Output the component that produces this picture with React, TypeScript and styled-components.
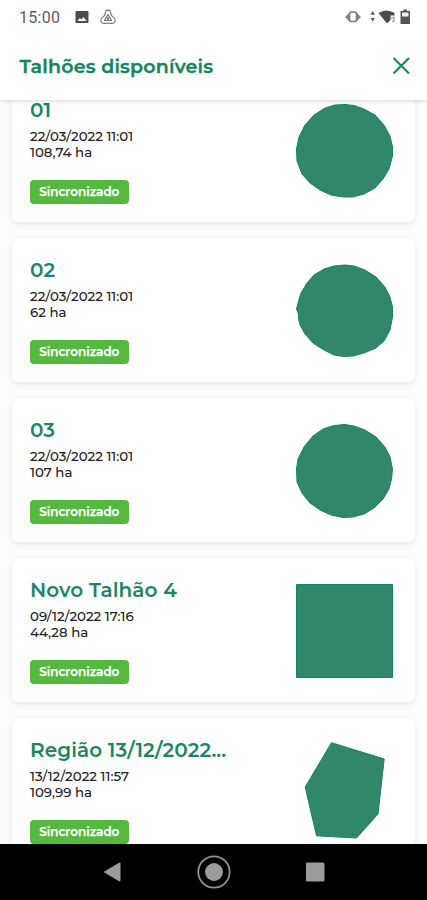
import React from "react";
import styled, { createGlobalStyle } from "styled-components";

const GlobalStyle = createGlobalStyle`
  * { box-sizing: border-box; }
  body { margin: 0; background: #fff; font-family: Montserrat, Inter, "Liberation Sans", sans-serif; }
`;

const Screen = styled.div`
  width: 427px;
  height: 900px;
  display: flex;
  flex-direction: column;
  overflow: hidden;
  background: #fff;
`;

const Top = styled.div`
  flex: 0 0 100px;
  position: relative;
  z-index: 1;
  background: #fff;
  box-shadow: 0 1px 5px rgba(0, 0, 0, 0.17);
`;

const StatusBar = styled.div`
  height: 36px;
  padding: 0 16px 0 19px;
  display: flex;
  align-items: center;
  color: #5c5c5c;
`;

const Clock = styled.span`
  font: 400 16px/20px Roboto, sans-serif;
  letter-spacing: 0.3px;
  width: 56px;
`;

const StatusIcons = styled.svg<{ $end?: boolean }>`
  display: block;
  margin-left: ${(p) => (p.$end ? "auto" : "0")};
`;

const Header = styled.header`
  height: 60px;
  padding: 0 16px 0 19.5px;
  display: flex;
  align-items: center;
  justify-content: space-between;
`;

const Heading = styled.h1`
  margin: 2px 0 0;
  font-size: 19px;
  line-height: 24px;
  font-weight: 600;
  letter-spacing: 0.2px;
  color: #158560;
  -webkit-text-stroke: 0.35px #158560;
  white-space: nowrap;
`;

const CloseButton = styled.button`
  border: 0;
  padding: 0;
  background: none;
  width: 19px;
  height: 20px;
`;

const List = styled.main`
  flex: 1;
  min-height: 0;
  overflow: hidden;
  padding: 0 12px;
  background: #fdfdfd;
`;

const Stack = styled.div`
  display: flex;
  flex-direction: column;
  gap: 17px;
  margin-top: -21px;
`;

const Card = styled.article`
  flex: none;
  height: 143px;
  padding: 20px 18px 18px;
  display: flex;
  justify-content: space-between;
  border-radius: 7px;
  background: #fff;
  box-shadow: 0 2px 7px rgba(0, 0, 0, 0.09);
`;

const Info = styled.div`
  display: flex;
  flex-direction: column;
  align-items: flex-start;
`;

const Title = styled.h2`
  margin: 0 0 6.5px;
  font-size: 20px;
  line-height: 22px;
  font-weight: 600;
  letter-spacing: 0.08px;
  color: #1c8564;
  white-space: nowrap;
`;

const Detail = styled.span`
  font-size: 13.35px;
  line-height: 16px;
  font-weight: 500;
  color: #222;
  white-space: nowrap;
`;

const Badge = styled.span`
  width: 98.5px;
  height: 24px;
  margin-top: auto;
  border-radius: 4px;
  background: #54b93d;
  color: #fff;
  font-size: 12px;
  line-height: 23px;
  font-weight: 600;
  -webkit-text-stroke: 0.25px #fff;
  text-align: center;
`;

const Shape = styled.svg`
  display: block;
  width: 107px;
  height: 107px;
  margin: 0.5px 2px 0 0;
  fill: #30876c;
  stroke: #188361;
  stroke-width: 1;
`;

const NavBar = styled.nav`
  flex: 0 0 56px;
  background: #000;
  display: flex;
  align-items: center;
  justify-content: center;
`;

type Plot = {
  title: string;
  date: string;
  area: string;
  shape: React.ReactNode;
};

const plots: Plot[] = [
  {
    title: "01", date: "22/03/2022 11:01", area: "108,74 ha",
    shape: <path d="M57 4.500 66 5.500 76 9 87 15 96 25 102 36 104.500 47 104.500 56 101 69 95 79 87 88 76 94 65 97 55 97 43 95 32 90 22 83 14 74 9 61 8.500 49 11 37 17 25 26 15 37 8 47 5Z" />,
  },
  {
    title: "02", date: "22/03/2022 11:01", area: "62 ha",
    shape: <path d="M57 5 66 6 77 10 88 17 97 27 102 37 104.500 47 104.500 57 102 70 96 81 88 88 76 93 65 96 56 96.500 46 95 36 90 25 83 17 74 12 65 10.500 58 10.500 54 8.500 49 10 43 13 33 19 23 26 15 36 9 46 6Z" />,
  },
  {
    title: "03", date: "22/03/2022 11:01", area: "107 ha",
    shape: <path d="M57 4.500 66 6 77 10 88 17 97 27 102 37 104.500 49 103.500 59 101 69 95 79 86 88 76 94 65 97 55 97.500 43 95 32 90 22 83 14 73 9 62 8.500 49 10 39 16 27 25 16 35 9 46 5.500Z" />,
  },
  {
    title: "Novo Talhão 4", date: "09/12/2022 17:16", area: "44,28 ha",
    shape: <path d="M8.500 4.500H104.500V97.500H8.500Z" />,
  },
  {
    title: "Região 13/12/2022...", date: "13/12/2022 11:57", area: "109,99 ha",
    shape: <path d="M43.500 2.700 96.200 19 90 74 68.500 98 28.500 95.800 17.200 47Z" />,
  },
];

export default function App() {
  return (
    <>
      <GlobalStyle />
      <Screen>
        <Top>
          <StatusBar>
            <Clock>15:00</Clock>
            <StatusIcons width="42" height="20" viewBox="0 0 42 20">
              <path fill="#4c4c4c" fillRule="evenodd" d="M1.500 3h11q1 0 1 1v10q0 1-1 1h-11q-1 0-1-1v-10q0-1 1-1ZM2.500 13h9L8.500 9 6.300 11.500 4.800 10Z" />
              <g fill="none" stroke="#707070" strokeWidth="1.100" strokeLinejoin="round">
                <path d="M31 2.800q2-1.300 4 0l1.500 4.500 3.300 3.700q1.200 2-.6 3.800-2 1-6.200.2-4.200.8-6.200-.2-1.800-1.800-.6-3.800l3.300-3.700Z" />
                <path d="m33 6.500 3.600 6h-7.200Z" />
              </g>
              <circle cx="33" cy="10.500" r="1.200" fill="#666" />
            </StatusIcons>
            <StatusIcons $end width="67" height="20" viewBox="0 0 67 20">
              <path d="m1 9 5-5v10ZM17 9l-5-5v10Z" fill="#858585" />
              <rect x="5.500" y="4" width="7" height="9.500" rx="2" fill="#fff" stroke="#777" strokeWidth="1.500" />
              <path d="M26.500 6.800 28.700 3l2.200 3.800ZM26.500 10h4.400L28.700 13.500Z" fill="#555" />
              <path d="M34.500 5q8-5 16 0v2.500h-4v4.500l-3.500 3.500Z" fill="#4b4b4b" />
              <path d="M48 8.500v3M50 8.500v5M48 13.500h2" stroke="#999" strokeWidth="1.200" />
              <path d="M59.500 1.500h3.500V3h3v13h-9.500V3h3Z" fill="#555" />
              <path d="M58 4.500h6.500v4H58Z" fill="#eee" />
            </StatusIcons>
          </StatusBar>
          <Header>
            <Heading>Talhões disponíveis</Heading>
            <CloseButton aria-label="Fechar">
              <svg width="19" height="20" viewBox="0 0 19 20" fill="none" stroke="#158560" strokeWidth="2.100">
                <path d="m1.500 2 15.500 15.500M17 2 1.500 17.500" />
              </svg>
            </CloseButton>
          </Header>
        </Top>
        <List>
          <Stack>
            {plots.map((p) => (
              <Card key={p.title}>
                <Info>
                  <Title>{p.title}</Title>
                  <Detail>{p.date}</Detail>
                  <Detail>{p.area}</Detail>
                  <Badge>Sincronizado</Badge>
                </Info>
                <Shape viewBox="0 0 107 107">{p.shape}</Shape>
              </Card>
            ))}
          </Stack>
        </List>
        <NavBar>
          <svg width="230" height="40" viewBox="0 0 230 40" fill="#9c9c9c">
            <path d="M4.500 20 20.500 10.500q1 0 1 1v17q0 1-1 1Z" />
            <circle cx="115" cy="20" r="15.700" fill="none" stroke="#929292" strokeWidth="1.800" />
            <circle cx="115" cy="20" r="9" />
            <rect x="207" y="10.500" width="18.500" height="19" rx="1.500" />
          </svg>
        </NavBar>
      </Screen>
    </>
  );
}
